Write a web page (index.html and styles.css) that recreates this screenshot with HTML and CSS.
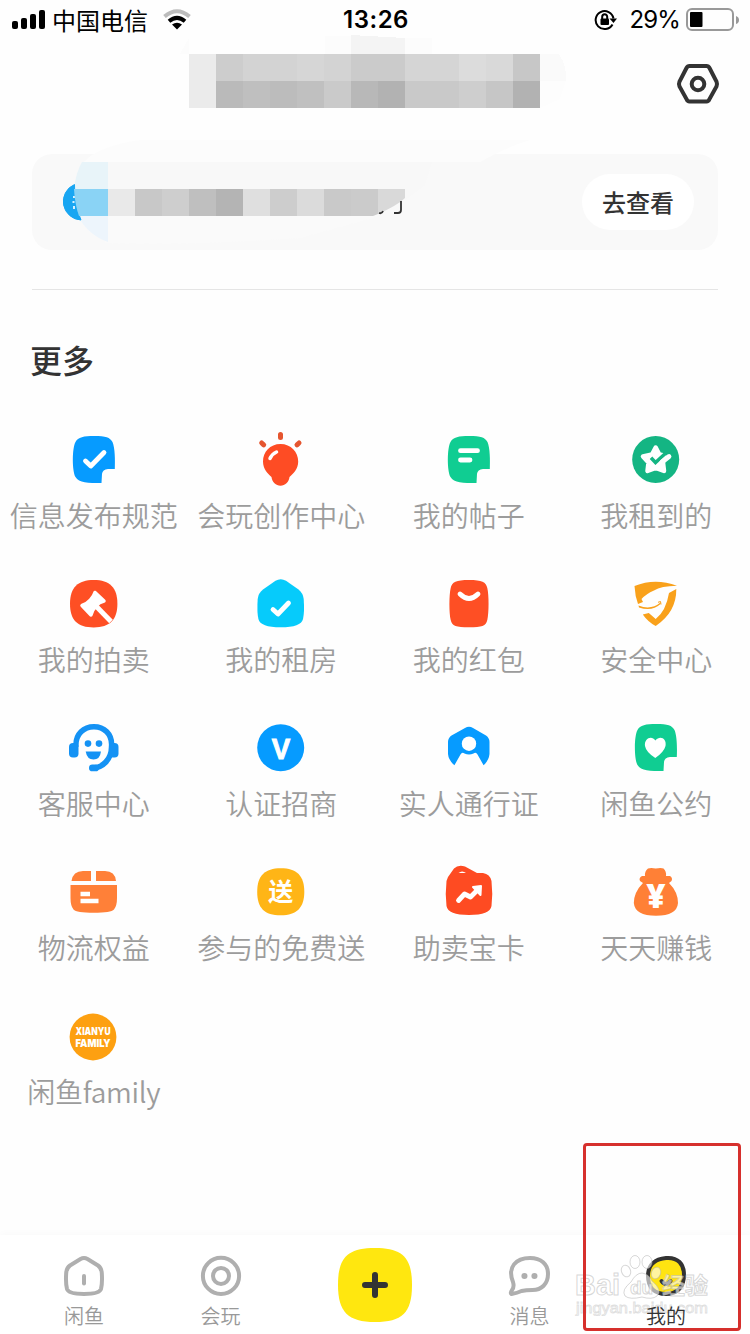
FILE: index.html
```html
<!DOCTYPE html>
<html lang="zh-CN">
<head>
<meta charset="utf-8">
<title>我的</title>
<link rel="stylesheet" href="styles.css">
</head>
<body>
<svg class="defs" width="0" height="0">
  <defs>
    <path id="note" d="M30 6C42 6 46 7.500 48.500 12C51 18 51.200 30 50.800 39H44Q38.500 39.500 38 44L37.500 53C24 53 15 53 11.500 47C8 41 8 18 11.500 12C14 7 20 6 30 6Z"/>
  </defs>
</svg>
<div class="screen">
  <header class="status">
    <div class="status-left">
      <svg width="34" height="22" viewBox="0 0 34 22"><rect x="0" y="12" width="6" height="8" rx="2"/><rect x="9" y="9" width="6" height="11" rx="2"/><rect x="18" y="5" width="6" height="15" rx="2"/><rect x="27" y="1" width="6" height="19" rx="2"/></svg>
      <span class="carrier">中国电信</span>
      <svg class="wifi" width="28" height="22" viewBox="0 0 28 22" fill="none"><path d="M1.500 7.500Q14-3 26.500 7.500" stroke="#bcbcbc" stroke-width="4"/><path d="M6 12.200Q14 5.500 22 12.200" stroke="#000" stroke-width="4"/><path d="M9 15.500Q14 11.800 19 15.500L14 20.500Z" fill="#000"/></svg>
    </div>
    <span class="clock">13:26</span>
    <div class="status-right">
      <svg width="24" height="22" viewBox="0 0 24 22" fill="none" stroke="#000" stroke-width="2"><path d="M18.500 15.500A9 9 0 1 1 19.500 9.500"/><path d="M15.500 9.500H23L19.500 14Z" fill="#000" stroke="none"/><rect x="6.500" y="9.500" width="8.500" height="6.500" rx="1" fill="#000" stroke="none"/><path d="M8.200 10V7.800a2.500 2.500 0 0 1 5 0V10"/></svg>
      <span class="percent">29%</span>
      <svg class="battery" width="54" height="24" viewBox="0 0 54 24"><rect x="1" y="1" width="46" height="21" rx="5" fill="none" stroke="#999" stroke-width="2"/><rect x="4" y="4" width="12.500" height="15" rx="1"/><path d="M50 8Q53 9 53 12T50 16Z" fill="#999"/></svg>
    </div>
  </header>

  <section class="profile">
    <svg class="name-mosaic" width="380" height="74" viewBox="0 0 380 74" shape-rendering="crispEdges">
      <path d="M1 18L9 4V20H0ZM145 2H171V20H145ZM225 4H252V20H225Z" fill="#fcfcfc"/><path d="M171 1L225 4V20H171Z" fill="#f4f4f4"/>
      <path d="M360 20H379Q387 32 386 47H360Z" fill="#fafafa"/><path d="M360 47H386L380 65L360 74Z" fill="#fdfdfd"/>
      <g transform="translate(9 20)">
        <path fill="#ebebeb" d="M0 0h27v54H0z"/><path fill="#cdcdcd" d="M27 0h27v27H27z"/><path fill="#d3d3d3" d="M54 0h54v27H54z"/><path fill="#d6d6d6" d="M108 0h27v27h-27z"/><path fill="#d3d3d3" d="M135 0h27v27h-27z"/><path fill="#cbcbcb" d="M162 0h54v27h-54z"/><path fill="#d5d5d5" d="M216 0h54v27h-54z"/><path fill="#dcdcdc" d="M270 0h27v27h-27z"/><path fill="#d9d9d9" d="M297 0h27v27h-27z"/><path fill="#c7c7c7" d="M324 0h27v27h-27z"/>
        <path fill="#bababa" d="M27 27h27v27H27z"/><path fill="#bfbfbf" d="M54 27h27v27H54z"/><path fill="#bcbcbc" d="M81 27h27v27H81z"/><path fill="#c0c0c0" d="M108 27h27v27h-27z"/><path fill="#cacaca" d="M135 27h27v27h-27z"/><path fill="#b8b8b8" d="M162 27h27v27h-27z"/><path fill="#b2b2b2" d="M189 27h27v27h-27z"/><path fill="#c9c9c9" d="M216 27h54v27h-54z"/><path fill="#cecece" d="M270 27h27v27h-27z"/><path fill="#c6c6c6" d="M297 27h27v27h-27z"/><path fill="#b2b2b2" d="M324 27h27v27h-27z"/>
      </g>
    </svg>
    <svg class="settings" width="44" height="42" viewBox="0 0 44 42" fill="none" stroke="#333" stroke-width="4"><path d="M13.500 3H30.500Q32.500 3 33.500 5L40.500 18.500Q41.500 21 40.500 23.500L33.500 36Q32.500 38.500 30.500 38.500H13.500Q11.500 38.500 10.500 36L3.500 23.500Q2.500 21 3.500 18.500L10.500 5Q11.500 3 13.500 3Z"/><circle cx="22" cy="21" r="6.300"/></svg>
  </section>

  <section class="notice">
    <svg class="notice-mosaic" width="500" height="110" viewBox="60 140 500 110">
      <path d="M84 162Q105 139 180 137H540Q510 145 480 162Z" fill="#fcfcfc"/>
      <path d="M108 216H380L300 238Q190 246 105 243Z" fill="#fafafa"/>
      <path d="M108 162H432L425 185L405 200V189H108Z" fill="#f8f8f8"/>
      <path d="M82 162H108V189H74Q76 172 82 162Z" fill="#e8f4f9"/><path d="M78 216H108V242Q88 235 78 216Z" fill="#edf5fc"/>
      <path d="M74.500 184.500A18.500 18.500 0 0 0 81 220Q74 204 74.500 184.500Z" fill="#18a6f2" stroke="#18a6f2"/><path d="M74 196v2M73.500 201v2M74 206v3" stroke="#d8f1ff" stroke-width="2"/>
      <path d="M74 189H108V216H79Q75 205 74 189Z" fill="#8ad3f5"/>
      <g shape-rendering="crispEdges"><path fill="#e9e9e9" d="M108 189h27v27h-27z"/><path fill="#c8c8c8" d="M135 189h27v27h-27z"/><path fill="#cecece" d="M162 189h27v27h-27z"/><path fill="#bfbfbf" d="M189 189h27v27h-27z"/><path fill="#b4b4b4" d="M216 189h27v27h-27z"/><path fill="#dfdfdf" d="M243 189h27v27h-27z"/><path fill="#cdcdcd" d="M270 189h27v27h-27z"/><path fill="#dbdbdb" d="M297 189h27v27h-27z"/><path fill="#c9c9c9" d="M324 189h27v27h-27z"/></g>
      <path fill="#cbcbcb" d="M351 189H378V214L373 216H351Z"/><path fill="#d9d9d9" d="M378 189H405V198Q398 205 378 214Z"/>
      <path d="M379 213Q382 214 383 211M394 213H398Q401 213 401 210V201" fill="none" stroke="#333" stroke-width="1.800"/>
    </svg>
    <button class="check-button">去查看</button>
  </section>

  <section class="more">
    <h2 class="more-title">更多</h2>
    <div class="services">
      <div class="service"><svg viewBox="0 0 60 60"><use href="#note" fill="#069bff"/><path class="line" d="M21.500 31L26.800 36L40 22.500"/></svg><span>信息发布规范</span></div>
      <div class="service"><svg viewBox="0 0 60 60"><path d="M29.500 14C40 14 47.200 22 47.200 31.500C47.200 39 42 44 38.500 47C38 52 34 55.700 29.500 55.700S21 52 20.500 47C17 44 12 39 12 31.500C12 22 19 14 29.500 14Z" fill="#fe4c24"/><path d="M29.500 4.500V7.500M10.700 13L12.700 14.800M48 13L46 14.800" stroke="#e5552f" stroke-width="5" stroke-linecap="round"/><path d="M19 28.500Q21 24 25.500 22" class="line thin"/></svg><span>会玩创作中心</span></div>
      <div class="service"><svg viewBox="0 0 60 60"><use href="#note" fill="#10cd92"/><path class="line" d="M21.500 20.700H38.500M21.500 30H31"/></svg><span>我的帖子</span></div>
      <div class="service"><svg viewBox="0 0 60 60"><circle cx="29.700" cy="29.500" r="23.500" fill="#14b583"/><path d="M29.700 17.500L33.300 24.500L38 25.500L37 32.500L38 41L29.700 37.800L21.500 41L22.500 32.500L17 26.500L26 24.500Z" fill="#fff" stroke="#fff" stroke-width="4.500" stroke-linejoin="round"/><path d="M25 27.800L29.500 32.500L41 22" fill="none" stroke="#14b583" stroke-width="3.500"/><path d="M36 32L43 26.500" class="line"/></svg><span>我租到的</span></div>

      <div class="service"><svg viewBox="0 0 60 60"><path d="M29.700 6C46 6 53.400 14 53.400 29.700S46 53.400 29.700 53.400S6 46 6 29.700S14 6 29.700 6Z" fill="#fe4f24"/><path d="M31 18.500L40 27Q35 28 32 32Q28 36 27 41L18 31.500Q23 30 26.500 26T31 18.500Z" fill="#fff" stroke="#fff" stroke-width="3.500" stroke-linejoin="round"/><path d="M31 31L47 47.500" stroke="#fff" stroke-width="5"/></svg><span>我的拍卖</span></div>
      <div class="service"><svg viewBox="0 0 60 60"><path d="M24.500 6.800Q29.700 3.600 35 6.800L47.500 15.500Q52 19 52.700 25Q53.600 38 52 45Q50 53.300 29.700 53.300T7.400 45Q5.800 38 6.700 25Q7.400 19 12 15.500Z" fill="#06cbfb"/><path class="line" d="M22 35.500L27 40L37.500 29"/></svg><span>我的租房</span></div>
      <div class="service"><svg viewBox="0 0 60 60"><path d="M30 6C43 6 47 8 48.300 14C50 21 50 39 48.300 46C47 52 43 53.300 30 53.300S13 52 11.700 46C10 39 10 21 11.700 14C13 8 17 6 30 6Z" fill="#fe4f24"/><path class="line" d="M21 20Q30 29 39 20"/></svg><span>我的红包</span></div>
      <div class="service"><svg viewBox="0 0 60 60" fill="#f9a11b"><path d="M8.500 12Q29 3.500 51 11.700Q35 12 28 16.500Q20 20 15.500 25L17 28L12 30Q9 22 8.500 12Z"/><path d="M50.300 15Q50.500 38 29.700 52Q22 48 16.800 40.500L22.800 39L29.700 45Q40 37 43 19Z"/><path d="M12.500 31.500Q25 36.500 34.500 28.500V30Q26 38 13 33.500Z"/><path d="M32 28.300L34.500 27.500L35 30.500" fill="none" stroke="#f9a11b"/></svg><span>安全中心</span></div>

      <div class="service"><svg viewBox="0 0 60 60" fill="#1492f4"><path d="M12 29C10 2 50 2 47.500 29C47.500 41 39 50 28 50" fill="none" stroke="#1492f4" stroke-width="5.500"/><rect x="5" y="25" width="9.500" height="14.500" rx="4"/><rect x="45" y="25" width="9.500" height="14.500" rx="4"/><circle cx="24" cy="25.600" r="3.300"/><circle cx="35" cy="25.600" r="3.300"/><path d="M21.700 33.500H37Q36 41.500 29.500 41.500T21.700 33.500Z"/><rect x="25" y="46.500" width="10" height="6.800" rx="3.400"/></svg><span>客服中心</span></div>
      <div class="service"><svg viewBox="0 0 60 60"><circle cx="29.700" cy="29.700" r="23.500" fill="#069bff"/><text class="mark-v" x="29.900" y="40.500" textLength="18.500" lengthAdjust="spacingAndGlyphs">V</text></svg><span>认证招商</span></div>
      <div class="service"><svg viewBox="0 0 60 60"><path d="M26 10Q30 7.500 34 10L47 17.500Q50.500 20 50.500 24V36Q50 42 44.600 47.300L38.500 36.500Q37 33.500 34.500 35.500Q30 37.500 25.500 35.500Q23 33.500 21.500 36.500L15.400 47.300Q9.500 42 9 36V24Q9 20 12.500 17.500Z" fill="#069bff"/><circle cx="30" cy="25.700" r="7.200" fill="#fff"/></svg><span>实人通行证</span></div>
      <div class="service"><svg viewBox="0 0 60 60"><use href="#note" fill="#10cd92"/><path d="M29.300 22.500C34 17 41 20.500 39.500 28Q38 34 29.300 40Q20 34 19 28C18 20 26 17 29.300 22.500Z" fill="#fff"/></svg><span>闲鱼公约</span></div>

      <div class="service"><svg viewBox="0 0 60 60"><path d="M27 9V19H7.500Q9 9 19 9ZM32 9H41Q51 9 52 19H32ZM6.500 23H53V36Q53 44 50 47.500Q47 50.700 29.700 50.700T9.500 47.500Q6.500 44 6.500 36Z" fill="#ff8038"/><path class="line butt" d="M16.500 32H26M16.500 39H34.500"/></svg><span>物流权益</span></div>
      <div class="service"><svg viewBox="0 0 60 60"><path d="M29.700 6.200C46 6.200 53.300 14 53.300 29.700S46 53.300 29.700 53.300S6.200 46 6.200 29.700S14 6.200 29.700 6.200Z" fill="#ffb516"/><text class="mark-give" x="29.700" y="39">送</text></svg><span>参与的免费送</span></div>
      <div class="service"><svg viewBox="0 0 60 60"><path d="M9 15L15 6.500Q19 2.500 26 4.500L38 11H44Q51 12 52.500 19Q54 32 52.500 44Q51 53 30 53T7.500 44Q6 32 7.500 19Z" fill="#fe4b22"/><path d="M19.500 11Q23 8 27 11Z" fill="#fff"/><path class="line" d="M19.500 38.500L25.500 32L31.500 35L38 28.500"/><path d="M34 25L42 24L41.500 33Z" fill="#fff" stroke="#fff" stroke-width="2" stroke-linejoin="round"/></svg><span>助卖宝卡</span></div>
      <div class="service"><svg viewBox="0 0 60 60" fill="#ff8036"><path d="M22 6.500Q25 5.500 29.700 6.500Q35 5.500 37.500 6.500Q40.500 9 40 14H44Q47 16 45.500 19L43 21Q52 30 52 41Q51 53.700 30 53.700T7.800 41Q8 30 17 21L14 19Q12.500 16 16 14H19Q18.500 9 22 6.500Z"/><text class="mark-yuan" x="29.800" y="46">¥</text></svg><span>天天赚钱</span></div>

      <div class="service"><svg viewBox="0 0 60 60"><circle cx="29" cy="31" r="23.400" fill="#fda011"/><text class="mark-family" x="29" y="29.300" textLength="35" lengthAdjust="spacingAndGlyphs">XIANYU</text><text class="mark-family" x="29" y="40.800" textLength="35" lengthAdjust="spacingAndGlyphs">FAMILY</text></svg><span class="family-label">闲鱼family</span></div>
    </div>
  </section>

  <nav class="tabs">
    <div class="tab"><svg viewBox="0 0 44 44"><path d="M18.500 5Q22 3 25.500 5L36 11.500Q39.500 14 39.800 19Q40.500 29 39 35Q37.500 40 22 40T5 35Q3.500 29 4.200 19Q4.500 14 8 11.500Z"/><path d="M22 22V29.500"/></svg><span>闲鱼</span></div>
    <div class="tab"><svg viewBox="0 0 44 44"><circle cx="22" cy="21.900" r="18.100"/><circle cx="22" cy="21.900" r="8"/></svg><span>会玩</span></div>
    <div class="publish"><svg width="74" height="74" viewBox="0 0 74 74"><path d="M37 0C64 0 74 9 74 37S64 74 37 74S0 64 0 37S9 0 37 0Z" fill="#ffe70f"/><path d="M37 27V47M27 37H47" stroke="#333" stroke-width="6" stroke-linecap="round"/></svg></div>
    <div class="tab"><svg viewBox="0 0 44 44"><path d="M22 4C33 4 40 10 40 20S33.500 36 24.500 36Q18 36 13.500 37Q9.500 39 3.500 40Q2 39 4 36Q6.500 33 5 28C-1 13 8 4 22 4Z"/><path d="M16.400 22H16.500M26.400 22H26.500" class="dots"/></svg><span>消息</span></div>
    <div class="tab active"><svg viewBox="0 0 44 44"><path d="M22 4C34 3 40 10 40 21S34 40 22 40S4 33 4 22S11 5 22 4Z" fill="#ffe411"/><path d="M17.500 27Q22 33 26.500 27"/></svg><span>我的</span></div>
  </nav>

  <svg class="watermark" width="140" height="72" viewBox="0 0 140 72">
    <g class="wm-shape"><ellipse cx="53" cy="27" rx="4.500" ry="6" transform="rotate(-20 53 27)"/><ellipse cx="62" cy="18" rx="5" ry="6.500"/><ellipse cx="74" cy="18" rx="5" ry="6.500"/><ellipse cx="83" cy="29" rx="4.500" ry="6" transform="rotate(20 83 29)"/><path d="M58 38Q63 29 69 29Q76 30 79 37Q90 46 84 52Q79 56 69 53Q57 56 52 52Q48 46 58 38Z"/></g>
    <g class="wm-text"><text x="2" y="51" font-size="29" textLength="45" lengthAdjust="spacingAndGlyphs">Bai</text><text x="57" y="50" font-size="19">du</text><text x="89" y="50" font-size="23">经验</text><text class="wm-url" x="3" y="69" font-size="15" textLength="132" lengthAdjust="spacingAndGlyphs">jingyan.baidu.com</text></g>
  </svg>
  <div class="highlight"></div>
</div>
</body>
</html>
```
FILE: styles.css
```css
* { box-sizing: border-box; }
body { margin: 0; background: #fff; font-family: "Noto Sans CJK SC", sans-serif; }
.defs { position: absolute; }
.screen { position: relative; width: 750px; height: 1334px; overflow: hidden; display: flex; flex-direction: column; background: #fefefe; }
.screen svg { display: block; flex: none; }

.status { height: 40px; display: grid; grid-template-columns: 1fr 70px 1fr; grid-template-rows: 40px; align-items: center; padding: 0 10px 0 12px; color: #000; }
.status-left, .status-right { display: flex; align-items: center; }
.status-right { justify-content: flex-end; }
.carrier { margin-left: 6px; font-size: 24px; line-height: 40px; font-weight: 400; }
.wifi { margin-left: 15px; }
.clock { font: 600 24px/40px Inter, sans-serif; text-align: center; letter-spacing: 0.5px; white-space: nowrap; }
.percent { font: 400 24px/40px Inter, sans-serif; margin: 0 6px 0 12px; letter-spacing: -0.9px; }

.profile { height: 114px; display: flex; align-items: flex-start; padding: 0 30px 0 180px; }
.name-mosaic { margin-top: -6px; overflow: visible; }
.settings { margin: 23px 0 0 auto; }

.notice { height: 96px; margin: 0 32px; padding-right: 24px; display: flex; align-items: center; justify-content: space-between; background: #f9f9f9; border-radius: 20px; }
.notice-mosaic { margin: -14px 0 0 28px; }
.check-button { width: 112px; height: 56px; flex: none; border: 0; padding: 0; border-radius: 28px; background: #fff; color: #333; font: 500 24px/56px "Noto Sans CJK SC", sans-serif; }

.more { margin-top: 39px; flex: 1; }
.more::before { content: ""; display: block; height: 1px; margin: 0 32px; background: #e5e5e5; }
.more-title { margin: 45px 0 0 30px; height: 95px; color: #333; font-size: 32px; line-height: 48px; font-weight: 500; }
.services { display: grid; grid-template-columns: repeat(4, 1fr); grid-auto-rows: 144px; }
.service { display: flex; flex-direction: column; align-items: center; color: #9c9c9c; font-size: 28px; line-height: 40px; font-weight: 350; white-space: nowrap; }
.service svg { width: 60px; height: 60px; }
.service span { margin-top: 5px; }
.service .family-label { letter-spacing: -0.3px; }
.line { fill: none; stroke: #fff; stroke-width: 4.8; stroke-linecap: round; stroke-linejoin: round; }
.thin { stroke-width: 3.5; }
.butt { stroke-width: 4.4; stroke-linecap: butt; }
.mark-v, .mark-give, .mark-yuan, .mark-family { fill: #fff; text-anchor: middle; }
.mark-v { font: 700 30px "Liberation Sans", sans-serif; stroke: #fff; stroke-width: 1; }
.mark-give { font: 700 25px "Noto Sans CJK SC", sans-serif; }
.mark-yuan { font: 800 33px "Open Sans", sans-serif; }
.mark-family { font: 900 11px Inter, sans-serif; }

.tabs { height: 99px; padding: 0 16px; display: grid; grid-template-columns: 136px 137px 172px 137px 136px; background: #fff; box-shadow: 0 -1px 8px rgba(0,0,0,.025); }
.tab { display: flex; flex-direction: column; align-items: center; padding-top: 19px; color: #999; font-size: 20px; line-height: 28px; font-weight: 350; }
.tab svg { width: 44px; height: 44px; fill: none; stroke: #afafaf; stroke-width: 4; stroke-linecap: round; stroke-linejoin: round; }
.tab span { margin-top: 4px; }
.tab .dots { stroke-width: 6; }
.tab.active { color: #333; }
.tab.active svg { stroke: #333; }
.tab.active span { position: relative; z-index: 1; }
.publish { display: flex; justify-content: center; padding-top: 13px; }

.highlight { position: absolute; left: 583px; top: 1143px; width: 158px; height: 188px; border: 3px solid #d6302d; border-radius: 4px; }
.watermark { position: absolute; left: 573px; top: 1244px; }
.wm-shape, .wm-text { fill: rgba(255,255,255,.6); stroke: rgba(175,175,175,.5); stroke-width: 1; }
.wm-text { font-family: "Liberation Sans", "Noto Sans CJK SC", sans-serif; font-weight: 700; }
.wm-text .wm-url { font-weight: 400; stroke: rgba(190,190,190,.5); stroke-width: .8; }
```
